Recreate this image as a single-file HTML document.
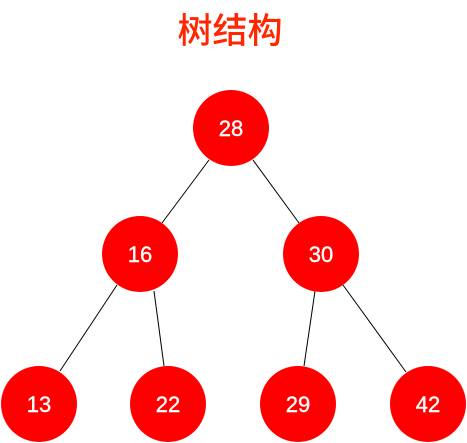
<!DOCTYPE html>
<html><head><meta charset="utf-8"><style>
html,body{margin:0;padding:0;background:#fff;width:467px;height:443px;overflow:hidden}
</style></head><body>
<svg width="467" height="443" xmlns="http://www.w3.org/2000/svg">
<text x="230" y="43" text-anchor="middle" font-family="Liberation Sans, Noto Sans CJK SC, sans-serif" font-size="35" font-weight="500" fill="#ff2600">树结构</text>
<g stroke="#000" stroke-width="1">
<line x1="209" y1="160" x2="162" y2="223"/>
<line x1="253" y1="160" x2="299" y2="223"/>
<line x1="117" y1="285" x2="60" y2="371"/>
<line x1="154" y1="291" x2="164" y2="366"/>
<line x1="315" y1="291" x2="304" y2="366"/>
<line x1="343" y1="285" x2="406" y2="372"/>
</g>
<g fill="#ff0000">
<circle cx="231" cy="128" r="38"/>
<circle cx="140" cy="254" r="38"/>
<circle cx="321" cy="254" r="38"/>
<circle cx="39" cy="404" r="38"/>
<circle cx="168" cy="404" r="38"/>
<circle cx="298" cy="404" r="38"/>
<circle cx="428" cy="404" r="38"/>
</g>
<g fill="#fff" font-family="Liberation Sans, sans-serif" font-size="22" text-anchor="middle" stroke="#fff" stroke-width="0.4">
<text x="231" y="136">28</text>
<text x="140" y="262">16</text>
<text x="321" y="262">30</text>
<text x="39" y="412">13</text>
<text x="168" y="412">22</text>
<text x="298" y="412">29</text>
<text x="428" y="412">42</text>
</g>
</svg>
</body></html>
